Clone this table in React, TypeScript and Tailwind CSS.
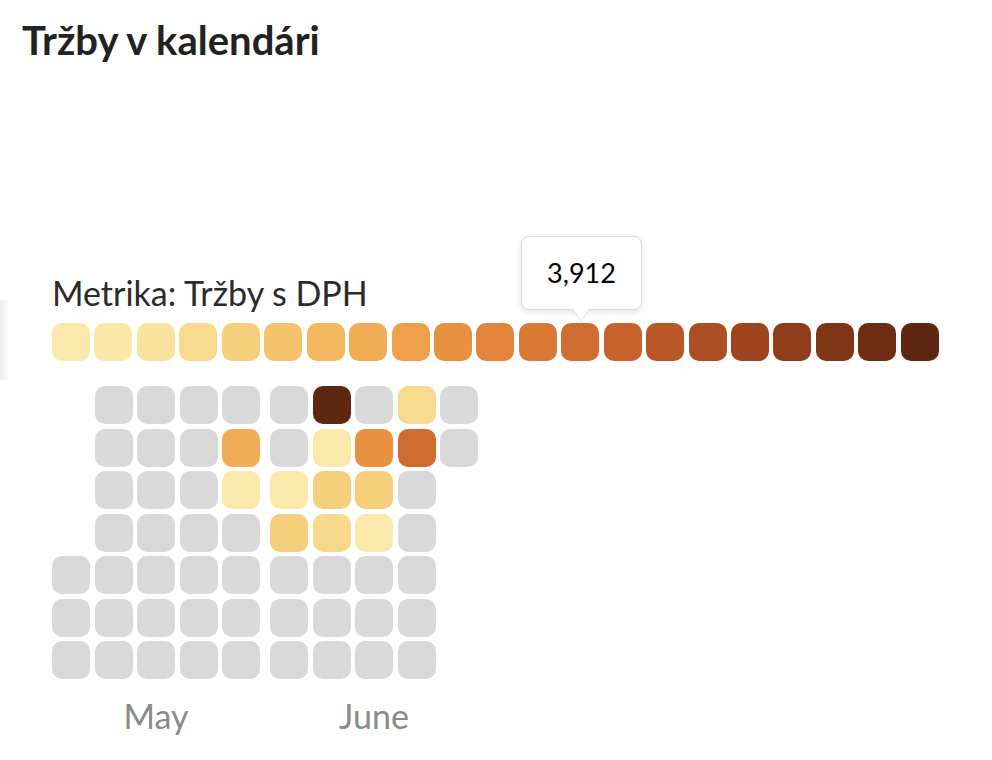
import React from 'react';

const RAMP = [
  '#fbe9ab', '#fbe8a7', '#fae39c', '#f8da8c', '#f6cf7d', '#f5c36c', '#f4b85f',
  '#f1ac54', '#ee9f49', '#e8913f', '#e28439', '#da7934', '#d06c2f', '#c6622a',
  '#b95726', '#ad4d22', '#9f451e', '#8f3c1a', '#803516', '#6f2d13', '#5e2711',
];

const GREY = '#d9d9d9';

// index dne v měsíci (od 0) -> barva
const mayColors: Record<number, string> = {
  25: '#f0ad55',
  26: '#fbe9ab',
};

const juneColors: Record<number, string> = {
  2: '#fbe9ab',
  3: '#f6cf7d',
  7: '#5e2711',
  8: '#fbe9ab',
  9: '#f6cf7d',
  10: '#f7d98b',
  15: '#e8913f',
  16: '#f6cf7d',
  17: '#fbe9ab',
  21: '#f7da8c',
  22: '#d06c2f',
};

function Cell({ color }: { color?: string }) {
  return (
    <div
      className="w-[38px] h-[38px] rounded-[10px]"
      style={{ backgroundColor: color ?? GREY }}
    />
  );
}

function Month({ offset, days, colors }: { offset: number; days: number; colors: Record<number, string> }) {
  const items: React.ReactNode[] = [];
  for (let i = 0; i < offset; i++) items.push(<div key={`e${i}`} className="w-[38px] h-[38px]" />);
  for (let d = 0; d < days; d++) items.push(<Cell key={d} color={colors[d]} />);
  return (
    <div className="grid grid-flow-col grid-rows-7 gap-[4.5px] w-fit">
      {items}
    </div>
  );
}

export default function App() {
  return (
    <div
      className="relative w-[992px] h-[760px] bg-white overflow-hidden px-[22px] pt-[16px]"
      style={{ fontFamily: 'Lato, "Noto Sans", sans-serif' }}
    >
      {/* stín okraje vlevo */}
      <div className="absolute left-0 top-[300px] w-[9px] h-[80px] bg-gradient-to-r from-[#ececec] to-transparent" />

      <h1 className="text-[40px] font-bold text-[#222222] leading-[48px]">Tržby v kalendári</h1>

      <div className="ml-[30px] mt-[209px]">
        <div className="text-[34px] text-[#2b2b2b] leading-[40px]">Metrika: Tržby s DPH</div>

        {/* legenda */}
        <div className="relative mt-[10px] flex w-[887px] justify-between">
          {RAMP.map(c => (
            <Cell key={c} color={c} />
          ))}

          {/* tooltip */}
          <div className="absolute left-[469px] bottom-[51px] w-[121px] h-[74px] bg-white border-[1.5px] border-[#dcdcdc] rounded-[8px] shadow-[0_2px_6px_rgba(0,0,0,0.12)] flex items-center justify-center">
            <span className="text-[27px] text-black">3,912</span>
            <svg className="absolute left-[50px] top-[100%] -mt-[2px]" width="18" height="15" viewBox="0 0 18 15">
              <polygon points="0,0 18,0 9,14" fill="#ffffff" />
              <polyline points="0,1 9,14 18,1" fill="none" stroke="#e2e2e2" strokeWidth="1" />
            </svg>
          </div>
        </div>

        {/* kalendář */}
        <div className="mt-[25px] flex gap-[10px]">
          <div className="flex flex-col items-center">
            <Month offset={4} days={31} colors={mayColors} />
            <div className="mt-[17px] text-[34px] text-[#8a8a8a] leading-[40px]">May</div>
          </div>
          <div className="flex flex-col items-center">
            <Month offset={0} days={30} colors={juneColors} />
            <div className="mt-[17px] text-[34px] text-[#8a8a8a] leading-[40px]">June</div>
          </div>
        </div>
      </div>
    </div>
  );
}
